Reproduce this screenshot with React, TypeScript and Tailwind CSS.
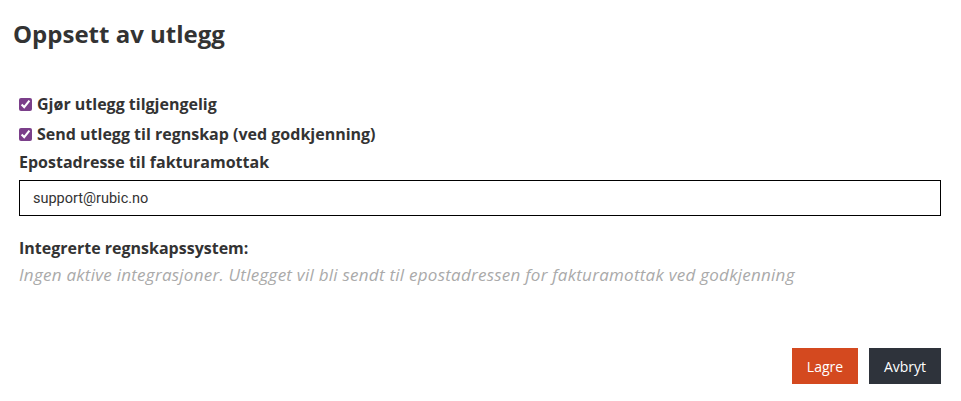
export default function App() {
  return (
    <div className="w-[961px] h-[401px] bg-white text-[#333] font-['Open_Sans',sans-serif] flex flex-col">
      <h1 className="pl-[13px] pt-[18px] text-[24px] font-bold leading-[32px]">Oppsett av utlegg</h1>

      <div className="pl-[19px] pr-[20px] pt-[39px] flex flex-col">
        <label className="flex items-center gap-[5px] h-[30px] text-[16px] font-bold">
          <input type="checkbox" defaultChecked className="w-[13px] h-[13px] accent-[#7b3f8a]" />
          Gjør utlegg tilgjengelig
        </label>
        <label className="flex items-center gap-[5px] h-[30px] text-[16px] font-bold">
          <input type="checkbox" defaultChecked className="w-[13px] h-[13px] accent-[#7b3f8a]" />
          Send utlegg til regnskap (ved godkjenning)
        </label>
        <div className="mt-[2px] text-[16px] font-bold leading-[22px]">Epostadresse til fakturamottak</div>
        <input
          defaultValue="support@rubic.no"
          className="mt-[7px] h-[36px] border border-black px-[13px] text-[14.5px] text-[#333] font-['Roboto',sans-serif] outline-none"
        />
        <div className="mt-[21px] text-[16px] font-bold leading-[22px]">Integrerte regnskapssystem:</div>
        <div className="mt-[5px] text-[17px] italic tracking-[0.25px] text-[#aaa] leading-[22px]">
          Ingen aktive integrasjoner. Utlegget vil bli sendt til epostadressen for fakturamottak ved godkjenning
        </div>
      </div>

      <div className="mt-auto mb-[17px] pr-[20px] flex justify-end gap-[11px]">
        <button className="w-[66px] h-[36px] bg-[#d4491f] text-white text-[14px]">Lagre</button>
        <button className="w-[72px] h-[36px] bg-[#2e333b] text-white text-[14px]">Avbryt</button>
      </div>
    </div>
  );
}
